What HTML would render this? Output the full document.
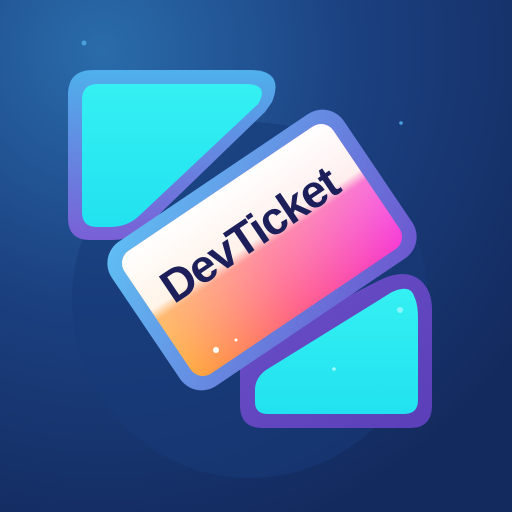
<!DOCTYPE html>
<html><head><style>html,body{margin:0;padding:0;width:512px;height:512px;overflow:hidden;background:#17346a}</style></head>
<body>
<svg width="512" height="512" viewBox="0 0 512 512" xmlns="http://www.w3.org/2000/svg">
<defs>
<radialGradient id="bg" cx="0.2" cy="0.1" r="1">
<stop offset="0" stop-color="#2a6cab"/><stop offset="0.5" stop-color="#1b4080"/><stop offset="1" stop-color="#132a5e"/>
</radialGradient>
<linearGradient id="bord1" x1="0" y1="0" x2="0" y2="1"><stop offset="0" stop-color="#4fb0ec"/><stop offset="1" stop-color="#7a5fd6"/></linearGradient>
<linearGradient id="bord2" x1="0" y1="0" x2="1" y2="1"><stop offset="0" stop-color="#5fc0f4"/><stop offset="1" stop-color="#6d55cf"/></linearGradient>
<linearGradient id="bord3" x1="0" y1="0" x2="1" y2="1"><stop offset="0" stop-color="#6a4fc8"/><stop offset="1" stop-color="#5a3fb8"/></linearGradient>
<linearGradient id="cy" x1="0" y1="0" x2="0" y2="1"><stop offset="0" stop-color="#34f0f2"/><stop offset="1" stop-color="#22e2f0"/></linearGradient>
<linearGradient id="col" x1="0" y1="0" x2="1" y2="0"><stop offset="0" stop-color="#ffa53a"/><stop offset="0.5" stop-color="#ff5f8a"/><stop offset="1" stop-color="#f63ad8"/></linearGradient>
<linearGradient id="wh" x1="0" y1="0" x2="0" y2="1"><stop offset="0" stop-color="#ffffff"/><stop offset="0.42" stop-color="#fff8f0" stop-opacity="0.95"/><stop offset="0.5" stop-color="#ffe9d0" stop-opacity="0.35"/><stop offset="1" stop-color="#ffffff" stop-opacity="0"/></linearGradient>
</defs>
<rect width="512" height="512" fill="url(#bg)"/>
<circle cx="250" cy="300" r="178" fill="#183a78" opacity="0.6"/>
<circle cx="84" cy="43" r="2.5" fill="#4aa0dc"/><circle cx="401" cy="123" r="1.8" fill="#4aa0dc"/>
<path d="M68 95 Q68 70 93 70 L250 70 Q285 70 272 102 L265 112 L145 228 Q132 240 110 240 L90 240 Q68 240 68 218 Z" fill="url(#bord1)"/>
<path d="M82 100 Q82 84 98 84 L245 84 Q270 84 258 104 L140 215 Q128 227 110 227 L97 227 Q82 227 82 212 Z" fill="url(#cy)"/>
<path d="M240 370 Q240 355 252 345 L380 280 Q405 268 420 280 Q432 290 432 310 L432 405 Q432 428 410 428 L262 428 Q240 428 240 405 Z" fill="url(#bord3)"/>
<path d="M255 390 Q255 378 266 370 L392 292 Q410 284 414 296 Q418 304 418 318 L418 400 Q418 414 404 414 L268 414 Q255 414 255 402 Z" fill="url(#cy)"/>
<circle cx="400" cy="310" r="3" fill="#9ff8ff" opacity="0.8"/><circle cx="334" cy="369" r="1.8" fill="#9ff8ff"/>
<g transform="translate(262 250) rotate(-34)">
<rect x="-140" y="-87" width="280" height="174" rx="26" fill="url(#bord2)"/>
<rect x="-126" y="-74" width="252" height="148" rx="15" fill="url(#col)"/>
<rect x="-126" y="-74" width="252" height="148" rx="15" fill="url(#wh)"/>
<text x="-2" y="-4" text-anchor="middle" font-family="Liberation Sans, sans-serif" font-weight="bold" font-size="46" fill="#1c1f5a" letter-spacing="-1.5">DevTicket</text>
</g>
<circle cx="216" cy="350" r="3" fill="#fff"/><circle cx="236" cy="340" r="1.5" fill="#fff"/>
</svg>
</body></html>
